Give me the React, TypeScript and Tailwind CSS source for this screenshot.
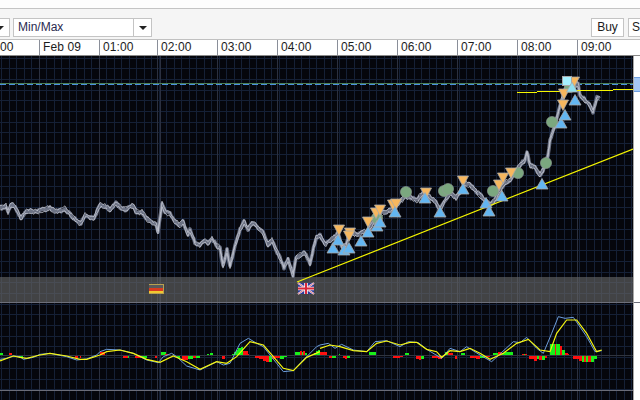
import React from "react";

const price: number[][] = [
  [0,207],[3,208],[6,206],[8,212],[11,204],[14,206],[18,212],[21,219],[25,212],[30,211],[36,212],[42,210],[50,208],[55,211],[60,211],[65,209],[70,214],[75,219],[79,223],[81,224],[85,215],[90,217],[94,218],[100,205],[105,206],[110,210],[116,203],[120,207],[125,210],[133,205],[136,212],[142,212],[147,219],[152,223],[156,225],[158,233],[162,204],[165,212],[170,214],[175,222],[180,225],[183,222],[188,235],[190,230],[195,243],[200,245],[204,240],[208,243],[212,238],[216,245],[220,248],[223,266],[227,250],[230,267],[235,245],[240,230],[244,222],[248,229],[252,224],[255,224],[258,228],[263,233],[268,245],[272,240],[276,250],[280,258],[284,268],[288,260],[293,275],[296,258],[300,255],[305,253],[310,263],[316,238],[320,235],[325,245],[330,240],[335,237],[338,232],[342,248],[346,245],[350,232],[358,235],[362,232],[368,232],[370,228],[376,218],[380,212],[385,213],[390,210],[395,207],[400,202],[406,196],[412,198],[417,200],[420,196],[425,193],[430,197],[436,203],[440,210],[445,200],[450,193],[456,198],[460,192],[465,183],[470,185],[475,190],[480,195],[485,200],[490,205],[495,200],[500,190],[505,183],[510,180],[515,172],[520,165],[525,160],[527,152],[530,165],[535,168],[540,175],[543,170],[546,162],[548,155],[550,140],[555,125],[560,105],[565,90],[572,88],[578,84],[580,95],[585,100],[590,106],[593,112],[597,98],[601,97],
];

// deterministic zigzag around a vertical offset: the high and low edges of the tick band
function jagged(points: number[][], offset: number, start: number) {
  const out: string[] = [];
  let seed = start;
  for (let i = 0; i < points.length - 1; i++) {
    const [x0, y0] = points[i];
    const [x1, y1] = points[i + 1];
    const steps = Math.max(1, Math.round((x1 - x0) / 1.2));
    for (let s = 0; s < steps; s++) {
      seed = (seed * 9301 + 49297) % 233280;
      const j = (seed / 233280 - 0.5) * 2.6;
      const t = s / steps;
      out.push(`${(x0 + (x1 - x0) * t).toFixed(1)},${(y0 + (y1 - y0) * t + j + offset).toFixed(1)}`);
    }
  }
  return out.join(" ");
}

const fromLeft = (p: number[][]) => p.map(([x, y]) => `${x / 3},${300 + y / 3}`).join(" ");
const fromRight = (p: number[][]) => p.map(([x, y]) => `${320 + x / 3},${300 + y / 3}`).join(" ");

const yellowL = [[0,183],[40,168],[60,172],[80,175],[120,165],[150,160],[200,168],[240,178],[260,178],[300,165],[320,155],[360,150],[400,160],[440,178],[480,187],[520,168],[560,185],[600,208],[650,185],[680,190],[710,170],[750,125],[790,135],[820,170],[850,205],[880,212],[920,172],[960,155]];
const blueL = [[0,178],[20,175],[40,168],[60,170],[70,178],[100,172],[120,163],[150,160],[200,170],[230,180],[260,177],[290,165],[300,155],[320,148],[360,150],[400,160],[440,180],[475,188],[490,170],[515,160],[530,170],[560,198],[600,210],[650,185],[670,195],[690,190],[720,130],[745,115],[770,130],[790,140],[830,190],[850,215],[880,212],[910,180],[950,140],[960,135]];
const yellowR = [[0,145],[30,135],[60,140],[100,152],[140,155],[170,130],[200,123],[240,135],[270,127],[290,127],[320,148],[350,155],[365,172],[390,152],[420,155],[450,145],[480,160],[510,178],[550,160],[590,130],[625,118],[660,150],[690,155],[710,100],[740,60],[770,60],[800,100],[830,155],[845,150]];
const blueR = [[0,135],[25,130],[45,145],[65,133],[100,150],[140,155],[165,125],[200,122],[240,140],[265,125],[295,128],[320,148],[365,175],[390,145],[420,155],[440,140],[480,165],[515,185],[580,125],[600,128],[620,112],[650,145],[670,160],[695,100],[715,50],[735,55],[760,52],[800,110],[825,155],[845,152]];

const G = "#19f019";
const R = "#ff1010";
// x, width, signed height (positive is above the zero line), colour
const bars: [number, number, number, string][] = [
  [0,3,2,G],[9,3,2,R],[19,4,-2,G],[75,3,-2,R],[80,1,-2,R],[100,5,3,R],[123,5,-2,R],[128,1,-2,G],[135,6,-2,R],[141,6,-2,G],[155,2,-2,R],
  [161,5,3,G],[165,3,1,R],[177,3,-2,G],[182,6,-4,R],[188,5,-3,G],[193,3,-2,R],[196,4,-2,G],[207,2,1,G],[210,3,2,G],[222,3,-3,R],
  [232,2,1,G],[234,2,3,G],[236,2,5,G],[238,3,7,G],[241,2,8,G],[243,2,4,R],[245,3,4,R],[248,1,1,R],[255,4,-2,R],[259,4,-3,R],[263,3,-5,R],[266,3,-6,R],[269,3,-6,G],[272,3,-3,R],[275,5,-2,R],[280,4,-3,G],[284,3,-1,G],
  [295,5,3,G],[300,2,4,R],[302,1,3,G],[303,2,4,R],[305,2,2,G],[314,2,2,G],[316,2,4,G],[318,2,5,G],
  [320,7,3,R],[329,3,-2,R],[332,4,-2,G],[339,1,1,G],[343,4,-2,R],[345,2,-3,R],[347,3,-2,G],[369,7,3,G],[393,7,-2,R],[400,3,-1,R],[405,4,2,G],[416,5,-3,R],[419,2,-4,R],[421,3,-3,G],[432,6,-2,R],[438,4,-3,R],
  [445,3,3,G],[448,5,2,R],[455,2,-3,R],[461,4,2,G],[470,6,-2,R],[476,4,-3,R],[480,5,-2,G],[485,5,-1,R],[493,5,2,G],[498,4,3,R],[502,3,2,G],[505,8,3,G],[522,5,1,R],[524,1,1,G],
  [529,6,-3,R],[534,3,-5,R],[537,2,-3,G],[539,3,-4,R],[542,3,-4,G],[545,2,-2,R],[550,5,11,G],[555,5,11,G],[555,1,11,R],[556,3,11,G],[560,2,9,R],[562,3,5,G],[565,3,2,R],[568,1,1,R],[573,6,-3,R],[579,3,-5,R],[582,2,-6,G],[584,2,-6,R],[586,2,-6,G],[588,3,-6,R],[591,3,-6,G],[594,3,-3,G],
];

const ups = [[333,248],[338,240],[344,250],[349,248],[361,241],[368,232],[377,226],[380,222],[395,212],[425,198],[440,212],[463,189],[486,203],[489,211],[502,196],[542,184],[561,123],[565,115],[575,100]];
const downs = [[339,230],[350,233],[349,236],[368,222],[376,213],[380,210],[393,205],[396,204],[426,193],[463,181],[499,185],[503,178],[511,173],[563,105],[564,94],[574,82]];
const circles = [[406,192],[444,191],[448,189],[493,191],[518,173],[546,163],[377,218],[552,122],[570,87]];

const minorX = Array.from({ length: 85 }, (_, i) => 1.5 + i * 7.5);
const minorY = Array.from({ length: 33 }, (_, i) => 58 + i * 10.7);
const majorX = [39, 99, 157, 160, 217, 277, 337, 397, 457, 517, 577];

function Chart() {
  return (
    <svg viewBox="0 56 633 344" className="block w-[633px] h-[344px] bg-[#05060c]">
      <g shapeRendering="crispEdges">
        {minorX.map((x) => <line key={x} x1={x} x2={x} y1={55} y2={400} stroke="#152036" />)}
        {minorY.map((y) => <line key={y} x1={0} x2={633} y1={y} y2={y} stroke="#152036" />)}
        {majorX.map((x) => <line key={x} x1={x + 0.5} x2={x + 0.5} y1={55} y2={400} stroke="#2b3040" />)}
        <line x1={0} x2={633} y1={83.5} y2={83.5} stroke="#4c7f55" />
        <line x1={0} x2={633} y1={84.5} y2={84.5} stroke="#4a90e0" strokeDasharray="6 3" />
        <line x1={0} x2={633} y1={355.5} y2={355.5} stroke="#30343e" />
        <rect x={0} y={277} width={633} height={26} fill="#666666" fillOpacity={0.64} />
        <line x1={0} x2={633} y1={302.5} y2={302.5} stroke="#6d6f7a" />
        <line x1={0} x2={633} y1={390.5} y2={390.5} stroke="#6a6c78" />
      </g>

      <polyline points={jagged(price, 0, 3)} fill="none" stroke="#6c7284" strokeWidth={3.6} strokeLinejoin="round" />
      <polyline points={jagged(price, -1.9, 7)} fill="none" stroke="#d0d3dc" strokeWidth={0.7} />
      <polyline points={jagged(price, 1.9, 11)} fill="none" stroke="#d0d3dc" strokeWidth={0.7} />

      <line x1={297} y1={282} x2={633} y2={149} stroke="#f5f500" strokeWidth={1.2} />
      <g stroke="#f5f500" shapeRendering="crispEdges">
        <line x1={517} x2={537} y1={92.5} y2={92.5} />
        <line x1={537} x2={560} y1={91.5} y2={91.5} />
        <line x1={560} x2={613} y1={90.5} y2={90.5} />
        <line x1={613} x2={633} y1={89.5} y2={89.5} />
      </g>

      {/* Germany */}
      <g shapeRendering="crispEdges">
        <rect x={148.5} y={284} width={15} height={10} fill="#b8a050" />
        <rect x={149} y={285} width={14} height={3} fill="#5a5a5a" />
        <rect x={149} y={288} width={14} height={3} fill="#d83a20" />
        <rect x={149} y={291} width={14} height={2} fill="#f0c830" />
      </g>
      {/* United Kingdom */}
      <g>
        <rect x={298} y={283} width={16} height={11} fill="#2c3a9a" />
        <path d="M298 283L314 294M314 283L298 294" stroke="#f4f4f8" strokeWidth={2} />
        <path d="M298 283L314 294M314 283L298 294" stroke="#d84050" strokeWidth={0.7} />
        <path d="M306 283V294M298 288.5H314" stroke="#f4f4f8" strokeWidth={3.6} />
        <path d="M306 283V294M298 288.5H314" stroke="#d8283a" strokeWidth={2} />
      </g>

      {bars.map(([x, w, h, c], i) => (
        <rect key={i} x={x} y={h > 0 ? 355 - h : 356} width={w} height={Math.abs(h)} fill={c} shapeRendering="crispEdges" />
      ))}
      <polyline points={fromLeft(blueL)} fill="none" stroke="#6f9fdc" strokeWidth={1} />
      <polyline points={fromRight(blueR)} fill="none" stroke="#6f9fdc" strokeWidth={1} />
      <polyline points={fromLeft(yellowL)} fill="none" stroke="#f5f510" strokeWidth={1.2} />
      <polyline points={fromRight(yellowR)} fill="none" stroke="#f5f510" strokeWidth={1.2} />

      {circles.map(([x, y], i) => <circle key={i} cx={x} cy={y} r={5.6} fill="#7ba77f" stroke="#8f9a94" strokeWidth={0.6} />)}
      {downs.map(([x, y], i) => (
        <polygon key={i} points={`${x - 5.5},${y - 5} ${x + 5.5},${y - 5} ${x},${y + 5.5}`} fill="#f7b75e" stroke="#a8a8a8" strokeWidth={0.8} />
      ))}
      {ups.map(([x, y], i) => (
        <polygon key={i} points={`${x},${y - 5.5} ${x + 6},${y + 5} ${x - 6},${y + 5}`} fill="#63b6f2" stroke="#a8a8a8" strokeWidth={0.8} />
      ))}
      <rect x={562.5} y={76.5} width={9} height={9} fill="#a6f0ff" stroke="#a8a8a8" />
      <polygon points="572,82 577.5,92 566.5,92" fill="#8fdff0" stroke="#a8a8a8" strokeWidth={0.8} />
    </svg>
  );
}

const hours: [string, string][] = [
  ["Feb 09", "w-[60px]"], ["01:00", "w-[58px]"], ["02:00", "w-[60px]"], ["03:00", "w-[60px]"], ["04:00", "w-[60px]"],
  ["05:00", "w-[60px]"], ["06:00", "w-[60px]"], ["07:00", "w-[60px]"], ["08:00", "w-[60px]"], ["09:00", "w-[56px]"],
];

export default function App() {
  return (
    <div className="w-[640px] h-[400px] overflow-hidden flex flex-col bg-white text-[12px] text-[#1c1c1c]" style={{ fontFamily: '"Liberation Sans", Arial, sans-serif' }}>
      <div className="h-[9px] bg-[#fdfdfd] border-b border-[#c4c4c4]" />
      <div className="h-[31px] bg-[#f5f5f5] border-b border-[#c0c0c0] flex items-start pt-[9px]">
        <div className="w-[10px] h-[19px] bg-white border border-l-0 border-[#c4c4c4] flex items-center overflow-hidden">
          <span className="-ml-[4px] w-0 h-0 border-x-[4px] border-x-transparent border-t-[4px] border-t-[#222]" />
        </div>
        <div className="ml-[3px] w-[139px] h-[19px] bg-white border border-[#c4c4c4] flex">
          <span className="flex-1 pl-[4px] leading-[17px] text-[#2a2a50]">Min/Max</span>
          <span className="w-[18px] border-l border-[#c4c4c4] flex items-center justify-center">
            <span className="w-0 h-0 border-x-[4px] border-x-transparent border-t-[4px] border-t-[#222]" />
          </span>
        </div>
        <div className="ml-auto flex gap-[4px]">
          <span className="w-[33px] h-[19px] bg-white border border-[#c4c4c4] text-center leading-[17px]">Buy</span>
          <span className="w-[12px] h-[19px] bg-white border border-r-0 border-[#c4c4c4] pl-[3px] leading-[17px]">S</span>
        </div>
      </div>
      <div className="h-[16px] bg-white border-b border-[#8a8a8a] flex leading-[15px] tracking-[0.1px]">
        <div className="w-[39px]">00</div>
        {hours.map(([label, w]) => (
          <div key={label} className={`${w} border-l border-[#8a8f99] pl-[3px]`}>{label}</div>
        ))}
      </div>
      <div className="flex-1 flex min-h-0">
        <Chart />
        <div className="flex-1 bg-white border-l border-[#a8a8a8] flex flex-col">
          <div className="mt-[21px] h-[15px] bg-[#a5c8f4] border-y border-[#6f9fe0]" />
          <div className="mt-[210px] h-[1px] bg-[#6d6f7a]" />
        </div>
      </div>
    </div>
  );
}
